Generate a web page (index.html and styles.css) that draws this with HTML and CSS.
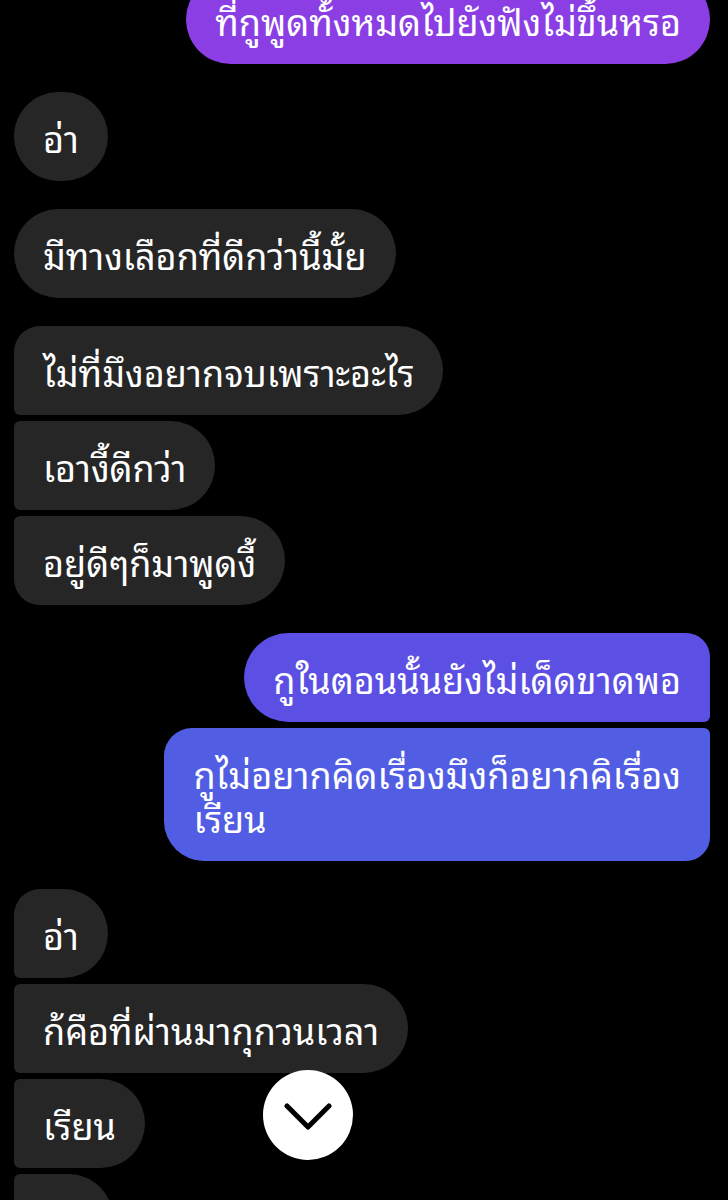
FILE: index.html
```html
<!DOCTYPE html>
<html lang="th">
<head>
    <meta charset="UTF-8">
    <meta name="viewport" content="width=device-width, initial-scale=1.0">
    <title>แชท</title>
    <link rel="stylesheet" href="styles.css">
</head>
<body>
    <div class="chat">
        <div class="msg sent first-top single purple">ที่กูพูดทั้งหมดไปยังฟังไม่ขึ้นหรอ</div>

        <div class="msg recv single">อ่า</div>

        <div class="msg recv single">มีทางเลือกที่ดีกว่านี้มั้ย</div>

        <div class="group">
            <div class="msg recv first">ไม่ที่มึงอยากจบเพราะอะไร</div>
            <div class="msg recv middle">เอางี้ดีกว่า</div>
            <div class="msg recv last">อยู่ดีๆก็มาพูดงี้</div>
        </div>

        <div class="group">
            <div class="msg sent first violet">กูในตอนนั้นยังไม่เด็ดขาดพอ</div>
            <div class="msg sent last blue">กูไม่อยากคิดเรื่องมึงก็อยากคิเรื่อง<br>เรียน</div>
        </div>

        <div class="group">
            <div class="msg recv first">อ่า</div>
            <div class="msg recv middle">ก้คือที่ผ่านมากุกวนเวลา</div>
            <div class="msg recv middle">เรียน</div>
            <div class="msg recv middle">ถึง</div>
        </div>
    </div>

    <button class="scroll-down" aria-label="เลื่อนลง">
        <svg width="48" height="30" viewBox="0 0 48 30">
            <path d="M3 4 L24 25 L45 4" fill="none" stroke="#000" stroke-width="5" stroke-linecap="round" stroke-linejoin="round"/>
        </svg>
    </button>
</body>
</html>
```

FILE: styles.css
```css
body {
    margin: 0;
    padding: 0;
    background-color: #000;
    color: #fff;
    font-family: "Noto Sans Thai Looped", "Noto Sans Thai", "Noto Sans", sans-serif;
    overflow: hidden;
    height: 1200px;
    position: relative;
}

.chat {
    display: flex;
    flex-direction: column;
    gap: 28px;
    padding: 0 18px 0 14px;
}

.group {
    display: flex;
    flex-direction: column;
    gap: 6px;
}

.msg {
    font-size: 36px;
    line-height: 44px;
    padding: 22.5px 29px;
    white-space: nowrap;
    border-radius: 44.5px;
}

.msg.recv {
    align-self: flex-start;
    background-color: #262626;
}

.msg.sent {
    align-self: flex-end;
}

.group .msg.recv.first {
    border-bottom-left-radius: 6px;
    border-top-left-radius: 26px;
}

.group .msg.recv.middle {
    border-top-left-radius: 6px;
    border-bottom-left-radius: 6px;
}

.group .msg.recv.last {
    border-top-left-radius: 6px;
    border-bottom-left-radius: 26px;
}

.group .msg.sent.first {
    border-top-right-radius: 24px;
    border-bottom-right-radius: 6px;
}

.group .msg.sent.last {
    border-top-right-radius: 6px;
    border-bottom-right-radius: 24px;
    border-top-left-radius: 28px;
    border-bottom-left-radius: 40px;
}

.first-top {
    margin-top: -25px;
}

.purple {
    background-color: #8a3ee4;
}

.violet {
    background-color: #5b50e3;
}

.blue {
    background-color: #515ee3;
}

.scroll-down {
    position: absolute;
    left: 263px;
    top: 1070px;
    width: 90px;
    height: 90px;
    border: none;
    border-radius: 50%;
    background-color: #fff;
    display: flex;
    align-items: center;
    justify-content: center;
    padding: 0;
    cursor: pointer;
}

.scroll-down svg {
    margin-top: 4px;
}
```
